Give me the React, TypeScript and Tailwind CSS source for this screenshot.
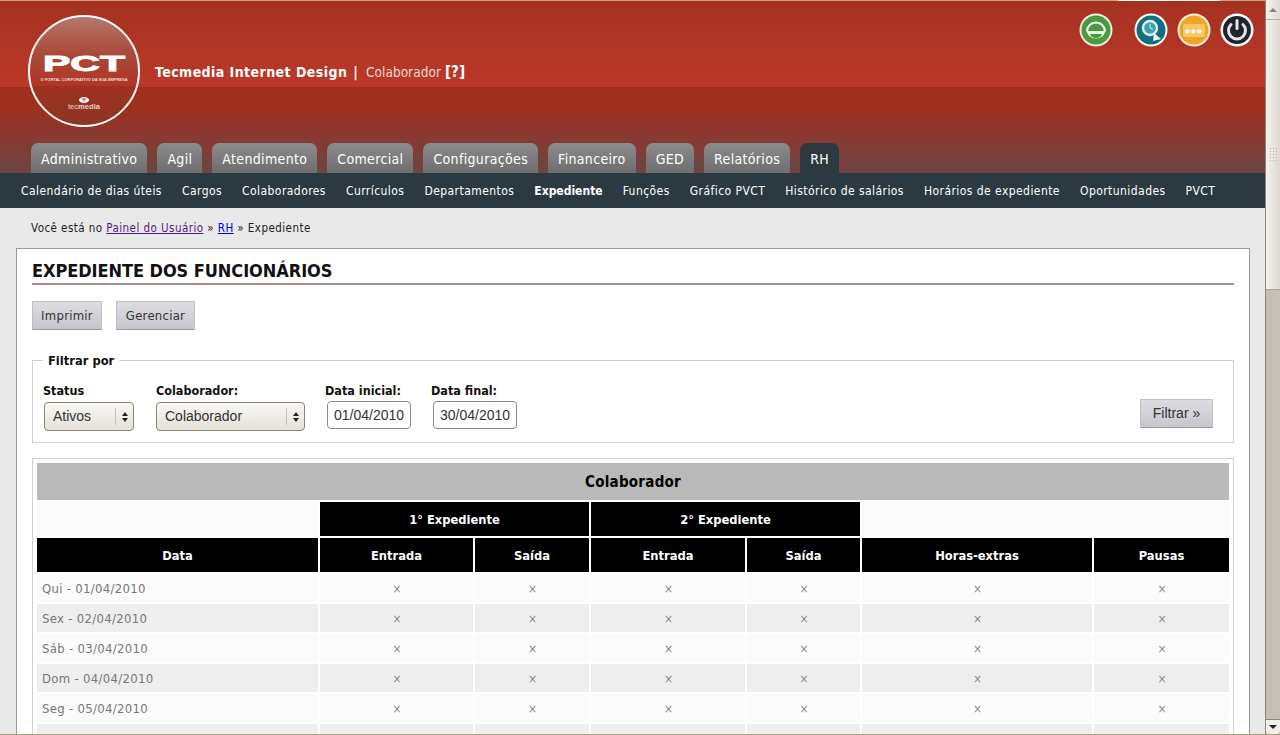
import React from 'react';

const FONT = "font-['DejaVu_Sans'] [font-stretch:condensed]";

const tabs = ['Administrativo', 'Agil', 'Atendimento', 'Comercial', 'Configurações', 'Financeiro', 'GED', 'Relatórios', 'RH'];
const submenu = ['Calendário de dias úteis', 'Cargos', 'Colaboradores', 'Currículos', 'Departamentos', 'Expediente', 'Funções', 'Gráfico PVCT', 'Histórico de salários', 'Horários de expediente', 'Oportunidades', 'PVCT'];
const rows = ['Qui - 01/04/2010', 'Sex - 02/04/2010', 'Sáb - 03/04/2010', 'Dom - 04/04/2010', 'Seg - 05/04/2010', 'Ter - 06/04/2010'];

const Logo = () => (
  <svg width="112" height="112" viewBox="0 0 112 112" className="shrink-0">
    <defs>
      <linearGradient id="logoBg" x1="0" y1="0" x2="0" y2="1">
        <stop offset="0" stopColor="#b5796c" />
        <stop offset="0.35" stopColor="#a94a38" />
        <stop offset="0.64" stopColor="#b03525" />
        <stop offset="0.64" stopColor="#a03120" />
        <stop offset="1" stopColor="#8c3524" />
      </linearGradient>
    </defs>
    <circle cx="56" cy="56" r="55" fill="url(#logoBg)" stroke="#fff" strokeWidth="2" />
    <text x="56" y="56" textAnchor="middle" fontFamily="Liberation Sans" fontWeight="700" fontSize="22" fill="#fff" stroke="#fff" strokeWidth="0.9" textLength="82" lengthAdjust="spacingAndGlyphs">PCT</text>
    <text x="56" y="65.5" textAnchor="middle" fontFamily="Liberation Sans" fontWeight="700" fontSize="4.4" fill="#f2dcd6" textLength="87" lengthAdjust="spacingAndGlyphs">O PORTAL CORPORATIVO DA SUA EMPRESA</text>
    <ellipse cx="56" cy="85" rx="5" ry="3" fill="#fff" />
    <path d="M53.5 84h5M56 84v3" stroke="#a03120" strokeWidth="0.8" />
    <text x="56" y="94" textAnchor="middle" fontFamily="Liberation Sans" fontSize="7" fill="#ecd0c8" textLength="32" lengthAdjust="spacingAndGlyphs">
      tec<tspan fontWeight="700">media</tspan>
    </text>
  </svg>
);

const Ring = ({ ring = '#fff', children }: { ring?: string; children: React.ReactNode }) => (
  <svg width="34" height="34" viewBox="0 0 34 34" className="shrink-0">
    <circle cx="17" cy="17" r="16.5" fill={ring} />
    {children}
  </svg>
);

const HeaderIcons = () => (
  <div className="flex items-start pt-[12px] h-fit">
    <Ring ring="#e6efe0">
      <circle cx="17" cy="17" r="14.5" fill="#4b9a3f" />
      <path d="M8 18.5a9 9 0 0 1 18 0" fill="none" stroke="#fff" strokeWidth="2" />
      <path d="M8 18h18v1a9 6.5 0 0 1-18 0z" fill="#eaf4d8" />
      <path d="M11 21h12a6 4 0 0 1-12 0z" fill="#4b9a3f" />
    </Ring>
    <div className="w-[21px]" />
    <Ring>
      <circle cx="17" cy="17" r="14.5" fill="#12707e" />
      <circle cx="16" cy="15" r="7" fill="#3f9fae" stroke="#d8f0f3" strokeWidth="2.4" />
      <path d="M16 11v4l3 1" fill="none" stroke="#d8f0f3" strokeWidth="1" />
      <path d="M20 20l7 6-8 2z" fill="#eef9fa" />
    </Ring>
    <div className="w-[9px]" />
    <Ring ring="#fdf3e0">
      <circle cx="17" cy="17" r="14.5" fill="#f0a526" />
      <rect x="6" y="11" width="22" height="13" rx="2" fill="#f8c663" />
      <text x="17" y="25" textAnchor="middle" fontFamily="Liberation Sans" fontWeight="700" fontSize="13" letterSpacing="1" fill="#fff">***</text>
    </Ring>
    <div className="w-[9px]" />
    <Ring>
      <circle cx="17" cy="17" r="14" fill="#20242c" />
      <path d="M11 11.5a8.5 8.5 0 1 0 12 0" fill="none" stroke="#e4e6ea" strokeWidth="3" strokeLinecap="round" />
      <path d="M17 7.5v8" fill="none" stroke="#e4e6ea" strokeWidth="3" strokeLinecap="round" />
    </Ring>
  </div>
);

const Header = () => (
  <header className="h-[172px] flex flex-col justify-between bg-[linear-gradient(#a5321f_0,#a73322_8px,#a83222_8px,#bb3928_86px,#a02f1e_86px,#a02f1e_105px,#6c4545_172px)]">
    <div className="flex justify-between pl-[28px] pr-[11px]">
      <div className="flex pt-[14px]">
        <Logo />
        <div className={`${FONT} ml-[15px] pt-[47px] text-white text-[14px] leading-[20px] h-fit`}>
          <span className="font-bold tracking-[0.44px]">Tecmedia Internet Design</span>
          <span className="font-bold ml-[6px] mr-[8px]">|</span>
          <span className="text-[#eedad5] text-[13.5px] tracking-[0.05px]">Colaborador</span>
          <span className="font-bold text-[15px] ml-[4px]">[?]</span>
        </div>
      </div>
      <HeaderIcons />
    </div>
    <nav className="flex gap-[10px] pl-[31px]">
      {tabs.map((t) => (
        <a
          key={t}
          className={`${FONT} h-[30px] px-[10px] rounded-t-[7px] text-[14px] tracking-[0.34px] leading-[32px] text-white ${t === 'RH' ? 'bg-[#2c3a40]' : 'bg-[linear-gradient(#8b8b8b,#6e6e6e)]'}`}
        >
          {t}
        </a>
      ))}
    </nav>
  </header>
);

const SubNav = () => (
  <div className="h-[35px] bg-[#2b3a40] flex items-center gap-[20px] pl-[21px]">
    {submenu.map((s) => (
      <a key={s} className={`${FONT} text-[12px] whitespace-nowrap text-white ${s === 'Expediente' ? 'font-bold tracking-[0px]' : 'tracking-[0.44px]'}`}>
        {s}
      </a>
    ))}
  </div>
);

const GrayButton = ({ children, className = '' }: { children: React.ReactNode; className?: string }) => (
  <button className={`h-[29px] border border-[#c0c0c0] border-b-[#999] bg-[linear-gradient(#dcdce2,#c6c6cc)] text-[#333] ${className}`}>{children}</button>
);

const SelectBox = ({ value, width }: { value: string; width: string }) => (
  <div className={`${width} h-[29px] flex items-center rounded-[4px] border border-[#8a8578] bg-[linear-gradient(#f8f7f4,#e4e1da)] font-['Liberation_Sans'] text-[14px] text-[#333]`}>
    <span className="flex-1 pl-[8px]">{value}</span>
    <span className="w-[18px] h-[17px] border-l border-[#c5c1b8] flex flex-col items-center justify-center gap-[2px]">
      <span className="w-0 h-0 border-x-[3px] border-x-transparent border-b-[4px] border-b-[#222]" />
      <span className="w-0 h-0 border-x-[3px] border-x-transparent border-t-[4px] border-t-[#222]" />
    </span>
  </div>
);

const DateBox = ({ value }: { value: string }) => (
  <div className="w-[84px] h-[28px] ml-[2px] -mt-[1px] flex items-center justify-center rounded-[4px] border border-[#8a8a8a] bg-white font-['Liberation_Sans'] text-[14px] text-[#333]">
    {value}
  </div>
);

const Field = ({ label, children, className = '' }: { label: string; children: React.ReactNode; className?: string }) => (
  <div className={className}>
    <div className={`${FONT} font-bold text-[12.5px] leading-[16px] mb-[3px] text-[#111]`}>{label}</div>
    {children}
  </div>
);

const Filter = () => (
  <fieldset className="mx-[15px] mt-[21px] h-[92px] border border-[#d0d0d0] pl-[10px] pr-[20px]">
    <legend className={`${FONT} font-bold text-[12.8px] px-[5px] text-[#111]`}>Filtrar por</legend>
    <div className="flex items-start pt-[13px]">
      <Field label="Status" className="w-[113px]">
        <div className="pl-[1px]"><SelectBox value="Ativos" width="w-[90px]" /></div>
      </Field>
      <Field label="Colaborador:" className="w-[169px]">
        <SelectBox value="Colaborador" width="w-[149px]" />
      </Field>
      <Field label="Data inicial:" className="w-[106px]">
        <DateBox value="01/04/2010" />
      </Field>
      <Field label="Data final:">
        <DateBox value="30/04/2010" />
      </Field>
      <GrayButton className="ml-auto mt-[16px] w-[73px] font-['Liberation_Sans'] text-[14px]">Filtrar »</GrayButton>
    </div>
  </fieldset>
);

const Th = ({ children, colSpan }: { children?: React.ReactNode; colSpan?: number }) => (
  <th colSpan={colSpan} className="h-[34px] p-0 pt-[1px] bg-black text-white text-[12.8px] font-bold text-center">{children}</th>
);

const DataTable = () => (
  <div className={`${FONT} mx-[15px] mt-[15px] border border-[#d0d0d0] px-[4px] pt-[4px]`}>
    <table className="table-fixed border-separate border-spacing-[2px] -mx-[2px] -mt-[2px] w-[calc(100%+4px)]">
      <colgroup>
        <col className="w-[281px]" />
        <col className="w-[153px]" />
        <col className="w-[114px]" />
        <col className="w-[154px]" />
        <col className="w-[113px]" />
        <col className="w-[230px]" />
        <col />
      </colgroup>
      <thead>
        <tr>
          <th colSpan={7} className="h-[37px] p-0 pt-[1px] bg-[#b9b9b9] text-black text-[15px] tracking-[0.25px] font-bold">Colaborador</th>
        </tr>
        <tr>
          <td className="bg-[#fafafa]" />
          <Th colSpan={2}>1° Expediente</Th>
          <Th colSpan={2}>2° Expediente</Th>
          <td colSpan={2} className="bg-[#fafafa]" />
        </tr>
        <tr>
          <Th>Data</Th>
          <Th>Entrada</Th>
          <Th>Saída</Th>
          <Th>Entrada</Th>
          <Th>Saída</Th>
          <Th>Horas-extras</Th>
          <Th>Pausas</Th>
        </tr>
      </thead>
      <tbody>
        {rows.map((r, i) => (
          <tr key={r} className={i % 2 === 0 ? 'bg-[#fbfbfb]' : 'bg-[#eeeeee]'}>
            <td className="h-[28px] p-0 pl-[5px] pt-[1px] text-[13px] text-[#777] tracking-[0.3px]">{r}</td>
            {[0, 1, 2, 3, 4, 5].map((c) => (
              <td key={c} className="p-0 pl-[1px] pt-[1px] text-center text-[12px] text-[#888]">×</td>
            ))}
          </tr>
        ))}
      </tbody>
    </table>
  </div>
);

const Scrollbar = () => (
  <aside className="w-[15px] shrink-0 flex flex-col border-l border-[#8c8678] bg-[#c8bfb3]">
    <div className="h-[20px] flex items-center justify-center bg-[linear-gradient(90deg,#f4f2ee,#e0dcd4)] border-b border-[#b5afa3]">
      <span className="w-0 h-0 border-x-[4px] border-x-transparent border-b-[4px] border-b-[#8c8678]" />
    </div>
    <div className="h-[270px] flex items-center justify-center bg-[linear-gradient(90deg,#f4f2ee,#ddd8d0)] border-b border-[#a89f92]">
      <div className="w-[8px] h-[16px] bg-[radial-gradient(#b5afa3_1px,transparent_1px)] bg-[length:3px_3px]" />
    </div>
    <div className="flex-1" />
    <div className="h-[15px] flex items-center justify-center rounded-b-[4px] border-t border-[#8c8678] bg-[#f0eee9]">
      <span className="w-0 h-0 border-x-[4px] border-x-transparent border-t-[4px] border-t-[#222]" />
    </div>
  </aside>
);

export default function App() {
  return (
    <div className="h-[735px] w-[1280px] overflow-hidden flex flex-col border-b border-[#a89f8e]">
      <div className="flex flex-1 min-h-0">
        <main className="flex-1 min-w-0 bg-[#e9e9e9] overflow-hidden">
          <div className="h-px bg-[linear-gradient(90deg,#c9a286_1118px,#fff_1118px,#fff_1220px,#c9a286_1220px)]" />
          <Header />
          <SubNav />
          <div className={`${FONT} pl-[31px] pt-[13px] h-[40px] text-[11.5px] tracking-[0.45px] leading-[14px] text-[#222]`}>
            Você está no <a className="underline text-[#551a8b]">Painel do Usuário</a> » <a className="underline text-[#0000ee]">RH</a> » Expediente
          </div>
          <section className="ml-[16px] w-[1234px] border border-[#999] bg-white pt-[11px] h-[600px]">
            <h1 className={`${FONT} mx-[15px] h-[25px] border-b-2 border-[#b58a8a] text-[18px] tracking-[-0.07px] leading-[22px] font-bold text-[#111]`}>
              EXPEDIENTE DOS FUNCIONÁRIOS
            </h1>
            <div className={`${FONT} flex gap-[14px] mx-[15px] mt-[16px] text-[13px] tracking-[0.25px]`}>
              <GrayButton className="w-[70px]">Imprimir</GrayButton>
              <GrayButton className="w-[79px]">Gerenciar</GrayButton>
            </div>
            <Filter />
            <DataTable />
          </section>
        </main>
        <Scrollbar />
      </div>
    </div>
  );
}
